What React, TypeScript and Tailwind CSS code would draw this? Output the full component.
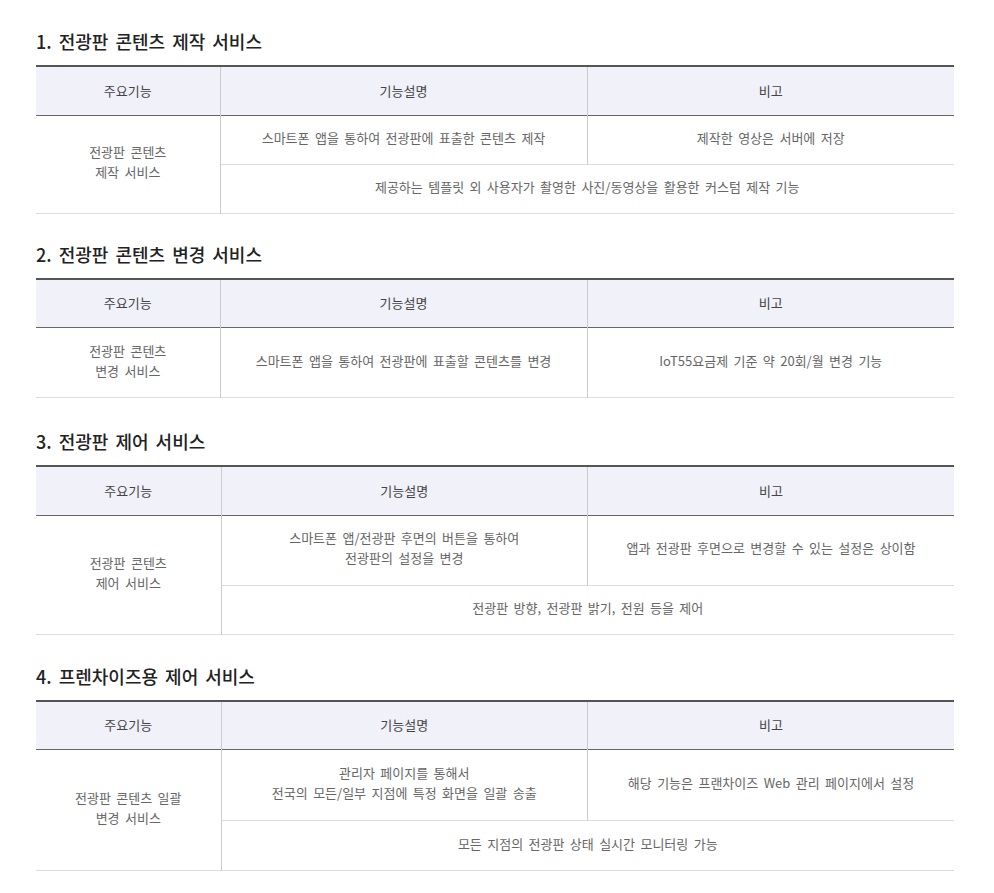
const font = {
  fontFamily: '"Noto Sans CJK KR", "Noto Sans", sans-serif',
};

type Row = { desc: string[]; note?: string[]; h: string };

type Section = {
  title: string;
  feature: string[];
  rows: Row[];
  firstCol: string;
  gap: string;
};

const sections: Section[] = [
  {
    title: "1. 전광판 콘텐츠 제작 서비스",
    feature: ["전광판 콘텐츠", "제작 서비스"],
    firstCol: "w-[184px]",
    gap: "",
    rows: [
      { desc: ["스마트폰 앱을 통하여 전광판에 표출한 콘텐츠 제작"], note: ["제작한 영상은 서버에 저장"], h: "h-[49px]" },
      { desc: ["제공하는 템플릿 외 사용자가 촬영한 사진/동영상을 활용한 커스텀 제작 기능"], h: "h-[49px]" },
    ],
  },
  {
    title: "2. 전광판 콘텐츠 변경 서비스",
    feature: ["전광판 콘텐츠", "변경 서비스"],
    firstCol: "w-[184px]",
    gap: "mt-[28px]",
    rows: [
      {
        desc: ["스마트폰 앱을 통하여 전광판에 표출할 콘텐츠를 변경"],
        note: ["IoT55요금제 기준 약 20회/월 변경 기능"],
        h: "h-[70px]",
      },
    ],
  },
  {
    title: "3. 전광판 제어 서비스",
    feature: ["전광판 콘텐츠", "제어 서비스"],
    firstCol: "w-[185px]",
    gap: "mt-[31px]",
    rows: [
      {
        desc: ["스마트폰 앱/전광판 후면의 버튼을 통하여", "전광판의 설정을 변경"],
        note: ["앱과 전광판 후면으로 변경할 수 있는 설정은 상이함"],
        h: "h-[70px]",
      },
      { desc: ["전광판 방향, 전광판 밝기, 전원 등을 제어"], h: "h-[49px]" },
    ],
  },
  {
    title: "4. 프렌차이즈용 제어 서비스",
    feature: ["전광판 콘텐츠 일괄", "변경 서비스"],
    firstCol: "w-[185px]",
    gap: "mt-[29px]",
    rows: [
      {
        desc: ["관리자 페이지를 통해서", "전국의 모든/일부 지점에 특정 화면을 일괄 송출"],
        note: ["해당 기능은 프랜차이즈 Web 관리 페이지에서 설정"],
        h: "h-[71px]",
      },
      { desc: ["모든 지점의 전광판 상태 실시간 모니터링 가능"], h: "h-[50px]" },
    ],
  },
];

function Lines({ lines }: { lines: string[] }) {
  return (
    <>
      {lines.map((l, i) => (
        <div key={i}>{l}</div>
      ))}
    </>
  );
}

function ServiceTable({ s }: { s: Section }) {
  return (
    <table className="w-[918px] border-collapse table-fixed text-[13px] leading-5 text-center [word-spacing:2.5px]">
      <colgroup>
        <col className={s.firstCol} />
        <col />
        <col />
      </colgroup>
      <thead>
        <tr className="h-[49px] bg-[#f0f1f9] text-[#444] border-t-2 border-t-[#555] border-b border-b-[#666]">
          <th className="font-normal border-r border-r-[#ccc]">주요기능</th>
          <th className="font-normal border-r border-r-[#ccc]">기능설명</th>
          <th className="font-normal">비고</th>
        </tr>
      </thead>
      <tbody className="text-[#666]">
        {s.rows.map((r, i) => (
          <tr key={i} className={`border-b border-b-[#ddd] ${r.h}`}>
            {i === 0 && (
              <td rowSpan={s.rows.length} className="border-r border-r-[#ccc] pb-1">
                <Lines lines={s.feature} />
              </td>
            )}
            {r.note ? (
              <>
                <td className="border-r border-r-[#ccc] pb-1">
                  <Lines lines={r.desc} />
                </td>
                <td className="pb-1">
                  <Lines lines={r.note} />
                </td>
              </>
            ) : (
              <td colSpan={2} className="pb-1">
                <Lines lines={r.desc} />
              </td>
            )}
          </tr>
        ))}
      </tbody>
    </table>
  );
}

export default function App() {
  return (
    <div className="bg-white min-h-screen pl-9 pt-[29px] pb-6" style={font}>
      {sections.map((s, i) => (
        <section key={i} className={s.gap}>
          <h2 className="text-[18px] leading-6 font-medium text-[#222] [word-spacing:3px] mb-3">
            {s.title}
          </h2>
          <ServiceTable s={s} />
        </section>
      ))}
    </div>
  );
}
